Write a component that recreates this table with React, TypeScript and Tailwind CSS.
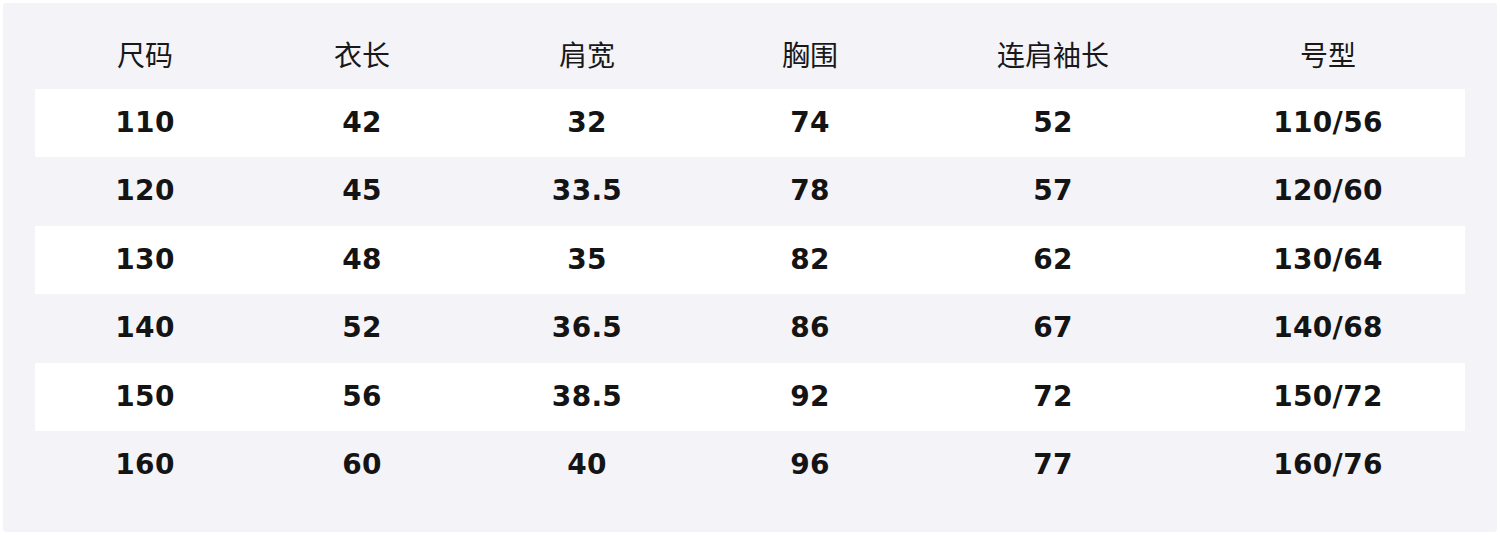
import React from "react";

const headers = ["尺码", "衣长", "肩宽", "胸围", "连肩袖长", "号型"];

const rows = [
  ["110", "42", "32", "74", "52", "110/56"],
  ["120", "45", "33.5", "78", "57", "120/60"],
  ["130", "48", "35", "82", "62", "130/64"],
  ["140", "52", "36.5", "86", "67", "140/68"],
  ["150", "56", "38.5", "92", "72", "150/72"],
  ["160", "60", "40", "96", "77", "160/76"],
];

const cols = "grid grid-cols-[220px_214px_236px_210px_276px_274px]";

export default function App() {
  return (
    <div className="bg-white p-[3px] h-[535px] w-[1500px]">
      <div className="bg-[#f4f3f8] rounded-[3px] px-[32px] pt-[17px] pb-[32px] h-[529px]">
        <div className={`${cols} h-[68.5px] items-center`}>
          {headers.map((h) => (
            <div
              key={h}
              className="text-center text-[28px] text-[#181818] font-['Noto_Sans_CJK_SC','Noto_Sans',sans-serif]"
            >
              {h}
            </div>
          ))}
        </div>
        {rows.map((row, i) => (
          <div
            key={row[0]}
            className={`${cols} h-[68.5px] items-center ${i % 2 === 0 ? "bg-white" : ""}`}
          >
            {row.map((cell, j) => (
              <div
                key={j}
                className="text-center text-[28px] font-bold text-[#141414] tracking-[0.3px] font-['DejaVu_Sans',sans-serif] leading-none"
              >
                {cell}
              </div>
            ))}
          </div>
        ))}
      </div>
    </div>
  );
}
